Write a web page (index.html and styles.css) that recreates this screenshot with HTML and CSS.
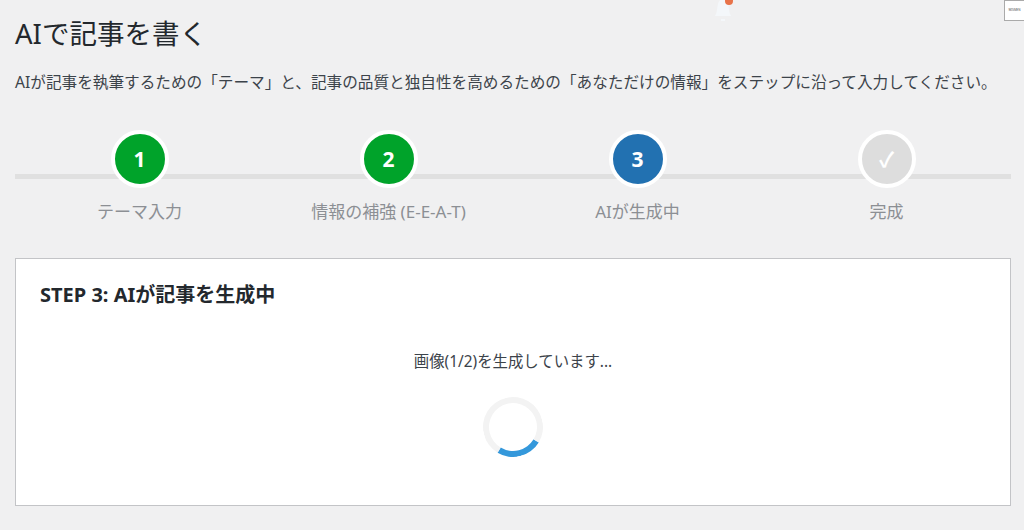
FILE: index.html
```html
<html>
    <head>
        <meta charset="UTF-8">
        <link rel="stylesheet" href="styles.css">
    </head>
    <body>
        <div class="bell">
            <svg width="24" height="22" viewBox="0 0 24 22">
                <path d="M3 16 C5 13 5 8 6 4 C6.5 1 9 -1 11 -1 C14 -1 16 1 16 4 C17 8 17 13 19 16 Z" fill="#f4f7fa"/>
                <rect x="9" y="19" width="4" height="2" fill="#f4f7fa"/>
                <circle cx="17" cy="1" r="4" fill="#e8734a"/>
            </svg>
        </div>
        <div class="thumb">WISMEN</div>

        <div class="wrap">
            <h1>AIで記事を書く</h1>
            <p class="lead">AIが記事を執筆するための「テーマ」と、記事の品質と独自性を高めるための「あなただけの情報」をステップに沿って入力してください。</p>

            <div class="steps">
                <div class="step done">
                    <div class="circle">1</div>
                    <div class="label">テーマ入力</div>
                </div>
                <div class="step done">
                    <div class="circle">2</div>
                    <div class="label">情報の補強 (E-E-A-T)</div>
                </div>
                <div class="step active">
                    <div class="circle">3</div>
                    <div class="label">AIが生成中</div>
                </div>
                <div class="step">
                    <div class="circle">✓</div>
                    <div class="label">完成</div>
                </div>
            </div>

            <div class="card">
                <h2>STEP 3: AIが記事を生成中</h2>
                <p class="status">画像(1/2)を生成しています...</p>
                <div class="spinner"></div>
            </div>
        </div>
    </body>
</html>
```

FILE: styles.css
```css
html, body {
    height: 100%;
}

body {
    margin: 0;
    background-color: #f0f0f1;
    color: #3c434a;
    font-family: "Noto Sans", "Noto Sans CJK JP", sans-serif;
    overflow: hidden;
}

.wrap {
    padding: 0 13px 0 15px;
}

h1 {
    margin: 0;
    padding-top: 15px;
    font-size: 27.5px;
    line-height: 38px;
    font-weight: 400;
    color: #23282d;
}

.lead {
    margin: 17px 0 0;
    font-size: 15.63px;
    line-height: 24px;
}

.steps {
    display: flex;
    position: relative;
    margin-top: 36px;
}

.steps::before {
    content: '';
    position: absolute;
    left: 0;
    right: 0;
    top: 44px;
    height: 5px;
    background-color: #e0e0e0;
}

.step {
    flex: 1;
    display: flex;
    flex-direction: column;
    align-items: center;
    position: relative;
}

.circle {
    box-sizing: border-box;
    width: 58px;
    height: 58px;
    border: 4px solid #fff;
    border-radius: 50%;
    background-color: #ddd;
    color: #fff;
    font-size: 21px;
    font-weight: 700;
    line-height: 51px;
    text-align: center;
}

.step.done .circle {
    background-color: #00a32a;
}

.step.active .circle {
    background-color: #2271b1;
}

.label {
    margin-top: 10px;
    font-size: 17px;
    line-height: 28px;
    color: #8c8f94;
}

.card {
    margin-top: 32px;
    height: 248px;
    box-sizing: border-box;
    background-color: #fff;
    border: 1px solid #c3c4c7;
    padding: 0 24px;
}

h2 {
    margin: 0;
    padding-top: 22px;
    font-size: 20px;
    line-height: 28px;
    font-weight: 700;
    color: #23282d;
}

.status {
    margin: 41px 0 0;
    font-size: 15.4px;
    line-height: 24px;
    text-align: center;
}

.spinner {
    box-sizing: border-box;
    width: 60px;
    height: 60px;
    margin: 23px auto 0;
    border: 6px solid #f3f3f3;
    border-top-color: #3498db;
    border-radius: 50%;
    transform: rotate(166deg);
}

.bell {
    position: absolute;
    left: 712px;
    top: 0;
    line-height: 0;
}

.thumb {
    position: absolute;
    right: 0;
    top: 0;
    box-sizing: border-box;
    width: 20px;
    height: 21px;
    background-color: #fff;
    border: 1px solid #aaa;
    border-right: 0;
    color: #555;
    font-size: 3px;
    line-height: 19px;
    text-align: center;
    overflow: hidden;
}
```
